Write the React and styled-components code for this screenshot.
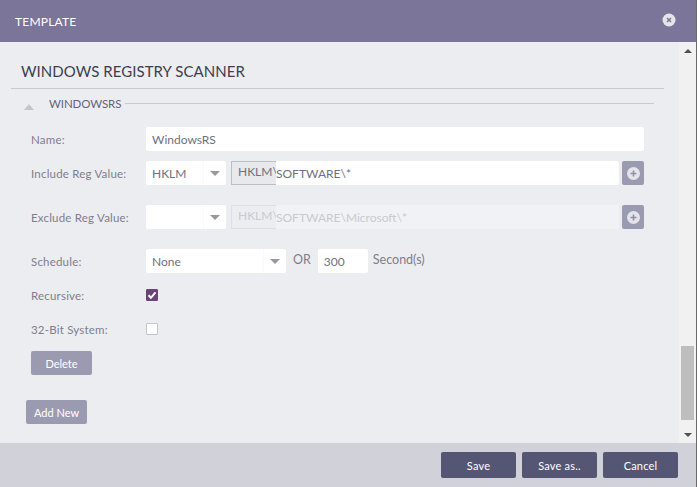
import React from 'react';
import styled, { createGlobalStyle } from 'styled-components';

const GlobalStyle = createGlobalStyle`
  html, body {
    margin: 0;
    padding: 0;
    background: #ecedf1;
  }
  * {
    box-sizing: border-box;
  }
`;

const Dialog = styled.div`
  width: 697px;
  height: 487px;
  display: flex;
  flex-direction: column;
  overflow: hidden;
  font-family: Lato, "Open Sans", sans-serif;
  color: #7d7d8f;
  border-right: 1px solid #6a6a6a;
`;

const Header = styled.header`
  height: 42px;
  flex: none;
  display: flex;
  align-items: center;
  justify-content: space-between;
  padding: 0 20px 0 15px;
  background: #7b7599;
`;

const HeaderTitle = styled.h1`
  margin: 0;
  font-size: 12px;
  font-weight: 400;
  letter-spacing: 0.2px;
  color: #fff;
`;

const CloseIcon = styled.svg`
  width: 14px;
  height: 14px;
  display: block;
  margin-top: -3px;
`;

const Middle = styled.div`
  flex: 1;
  display: flex;
  min-height: 0;
`;

const Content = styled.main`
  flex: 1;
  padding: 0 15px 0 11px;
`;

const Title = styled.h2`
  margin: 0;
  height: 47px;
  padding: 20px 0 0 10px;
  font-size: 15px;
  line-height: 18px;
  font-weight: 400;
  letter-spacing: 0.05px;
  color: #3d3d50;
  border-bottom: 1px solid #c9c9cf;
`;

const Section = styled.section`
  padding: 6px 10px 0 13px;
`;

const Legend = styled.div`
  height: 16px;
  display: flex;
  align-items: center;
`;

const Toggle = styled.span`
  width: 0;
  height: 0;
  margin-top: 7px;
  border-left: 5px solid transparent;
  border-right: 5px solid transparent;
  border-bottom: 6px solid #c4c4c9;
`;

const LegendText = styled.span`
  margin-left: 15px;
  font-size: 11.5px;
  letter-spacing: -0.1px;
  color: #64647a;
`;

const LegendLine = styled.span`
  flex: 1;
  height: 1px;
  margin-left: 4px;
  background: #c9c9cf;
`;

const Fields = styled.div`
  display: flex;
  flex-direction: column;
  padding: 16px 10px 0 7px;
`;

const Row = styled.div`
  display: flex;
  align-items: center;
  height: 24px;
  margin-bottom: ${p => p.$gap || 0}px;
`;

const Label = styled.label`
  width: 115px;
  flex: none;
  font-size: 11.5px;
  letter-spacing: 0.2px;
  color: #7d7d8f;
`;

const TextBox = styled.div`
  height: 24px;
  flex: ${p => (p.$width ? 'none' : 1)};
  width: ${p => (p.$width ? `${p.$width}px` : 'auto')};
  padding: 0 6px;
  display: flex;
  align-items: center;
  font-size: 12px;
  background: ${p => (p.$disabled ? '#f1f2f5' : '#fff')};
  color: ${p => (p.$disabled ? '#c9c9d0' : '#6f6f82')};
  border-radius: 2px;
`;

const SelectBox = styled(TextBox)`
  justify-content: space-between;
  padding-right: 0;
`;

const CaretZone = styled.span`
  width: 23px;
  height: 100%;
  display: flex;
  align-items: center;
  justify-content: center;
  border-left: 1px solid #f9f9fb;
`;

const Caret = styled.span`
  width: 0;
  height: 0;
  border-left: 5px solid transparent;
  border-right: 5px solid transparent;
  border-top: 5px solid #98989f;
`;

const Prefix = styled.div`
  width: 45px;
  height: 24px;
  flex: none;
  margin-left: 5px;
  padding: 0 0 3px 6px;
  display: flex;
  align-items: center;
  white-space: nowrap;
  font-size: 12px;
  color: ${p => (p.$disabled ? '#c9c9d0' : '#6f6f82')};
  background: ${p => (p.$disabled ? '#ecedf1' : '#e8e9ed')};
  border: 1px solid ${p => (p.$disabled ? '#dfdfe3' : '#bdbdc3')};
  border-right: none;
`;

const PathBox = styled(TextBox)`
  padding-left: 0;
  border-radius: 0 2px 2px 0;
`;

const AddButton = styled.button`
  width: 22px;
  height: 24px;
  flex: none;
  margin-left: 3px;
  padding: 0;
  display: flex;
  align-items: center;
  justify-content: center;
  background: #9a9bb0;
  border: none;
  border-radius: 2px;
`;

const PlusIcon = styled.svg`
  width: 13px;
  height: 13px;
  display: block;
`;

const Inline = styled.span`
  font-size: 12.5px;
  color: #7d7d8f;
  margin: ${p => p.$margin};
  padding-bottom: 4px;
`;

const CheckBox = styled.span`
  width: 12px;
  height: 12px;
  display: flex;
  align-items: center;
  justify-content: center;
  border-radius: 1px;
  background: ${p => (p.$checked ? '#6a4478' : '#fff')};
  border: 1px solid ${p => (p.$checked ? '#6a4478' : '#c4c4c9')};
`;

const CheckIcon = styled.svg`
  width: 10px;
  height: 10px;
  display: block;
`;

const GreyButton = styled.button`
  display: block;
  width: 61px;
  height: 24px;
  padding: 0;
  border: none;
  border-radius: 2px;
  background: #9a9bb0;
  color: #fff;
  font-family: inherit;
  font-size: 11px;
`;

const AddNewButton = styled(GreyButton)`
  margin: 25px 0 0 2px;
`;

const Scrollbar = styled.div`
  width: 17px;
  flex: none;
  display: flex;
  flex-direction: column;
  align-items: center;
  background: #f1f1f1;
`;

const ArrowButton = styled.div`
  height: 17px;
  flex: none;
  display: flex;
  align-items: center;
  justify-content: center;
`;

const ArrowUp = styled.span`
  width: 0;
  height: 0;
  border-left: 4px solid transparent;
  border-right: 4px solid transparent;
  border-bottom: 4px solid #505050;
`;

const ArrowDown = styled.span`
  width: 0;
  height: 0;
  border-left: 4px solid transparent;
  border-right: 4px solid transparent;
  border-top: 4px solid #505050;
`;

const Track = styled.div`
  flex: 1;
  width: 100%;
  display: flex;
  flex-direction: column;
  justify-content: flex-end;
  align-items: center;
  padding-bottom: 6px;
`;

const Thumb = styled.div`
  width: 13px;
  height: 74px;
  background: #bebebe;
`;

const Footer = styled.footer`
  height: 44px;
  flex: none;
  display: flex;
  align-items: flex-start;
  justify-content: flex-end;
  gap: 6px;
  padding: 9px 18px 0 0;
  background: #d1d1d9;
`;

const FooterButton = styled.button`
  width: 75px;
  height: 26px;
  padding: 0;
  border: none;
  border-radius: 2px;
  background: #545674;
  color: #fff;
  font-family: inherit;
  font-size: 11px;
  letter-spacing: 0.2px;
`;

const Plus = () => (
  <PlusIcon viewBox="0 0 13 13">
    <circle cx="6.5" cy="6.5" r="6.5" fill="#e4e4ea" />
    <path d="M3.5 6.5h6M6.5 3.5v6" stroke="#8f90a6" strokeWidth="1.6" />
  </PlusIcon>
);

const Select = ({ width, children }) => (
  <SelectBox $width={width}>
    <span>{children}</span>
    <CaretZone><Caret /></CaretZone>
  </SelectBox>
);

export default function App() {
  return (
    <>
      <GlobalStyle />
      <Dialog>
        <Header>
          <HeaderTitle>TEMPLATE</HeaderTitle>
          <CloseIcon viewBox="0 0 14 14">
            <circle cx="7" cy="7" r="6.5" fill="#e4e4ea" />
            <path d="M5 5l4 4M9 5l-4 4" stroke="#7b7599" strokeWidth="1.5" />
          </CloseIcon>
        </Header>

        <Middle>
          <Content>
            <Title>WINDOWS REGISTRY SCANNER</Title>
            <Section>
              <Legend>
                <Toggle />
                <LegendText>WINDOWSRS</LegendText>
                <LegendLine />
              </Legend>
              <Fields>
                <Row $gap={10}>
                  <Label>Name:</Label>
                  <TextBox>WindowsRS</TextBox>
                </Row>
                <Row $gap={20}>
                  <Label>Include Reg Value:</Label>
                  <Select width={80}>HKLM</Select>
                  <Prefix>HKLM\</Prefix>
                  <PathBox>SOFTWARE\*</PathBox>
                  <AddButton><Plus /></AddButton>
                </Row>
                <Row $gap={20}>
                  <Label>Exclude Reg Value:</Label>
                  <Select width={80} />
                  <Prefix $disabled>HKLM\</Prefix>
                  <PathBox $disabled>SOFTWARE\Microsoft\*</PathBox>
                  <AddButton><Plus /></AddButton>
                </Row>
                <Row $gap={10}>
                  <Label>Schedule:</Label>
                  <Select width={140}>None</Select>
                  <Inline $margin="0 7px 0 7px">OR</Inline>
                  <TextBox $width={50}>300</TextBox>
                  <Inline $margin="0 0 0 5px">Second(s)</Inline>
                </Row>
                <Row $gap={10}>
                  <Label>Recursive:</Label>
                  <CheckBox $checked>
                    <CheckIcon viewBox="0 0 10 10">
                      <path d="M1.5 5.2l2.4 2.6 4.6-5.4" fill="none" stroke="#fff" strokeWidth="2" />
                    </CheckIcon>
                  </CheckBox>
                </Row>
                <Row $gap={10}>
                  <Label>32-Bit System:</Label>
                  <CheckBox />
                </Row>
                <GreyButton>Delete</GreyButton>
              </Fields>
              <AddNewButton>Add New</AddNewButton>
            </Section>
          </Content>
          <Scrollbar>
            <ArrowButton><ArrowUp /></ArrowButton>
            <Track><Thumb /></Track>
            <ArrowButton><ArrowDown /></ArrowButton>
          </Scrollbar>
        </Middle>

        <Footer>
          <FooterButton>Save</FooterButton>
          <FooterButton>Save as..</FooterButton>
          <FooterButton>Cancel</FooterButton>
        </Footer>
      </Dialog>
    </>
  );
}
